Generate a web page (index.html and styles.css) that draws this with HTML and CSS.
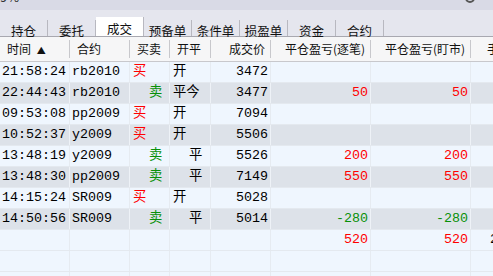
FILE: index.html
```html
<!DOCTYPE html>
<html>
  <head>
    <title>成交</title>
    <meta name="viewport" content="width=device-width, initial-scale=1">
    <link rel="stylesheet" href="styles.css">
  </head>
  <body>
    <div class="topbar">
      <span class="pct">9%</span>
      <svg class="gear" width="12" height="12" viewBox="0 0 12 12"><circle cx="6" cy="6" r="4" fill="none" stroke="#555" stroke-width="2"/></svg>
    </div>
    <div class="gap"></div>
    <div class="tabs">
      <div class="tab">持仓</div>
      <div class="tab">委托</div>
      <div class="tab active">成交</div>
      <div class="tab">预备单</div>
      <div class="tab">条件单</div>
      <div class="tab">损盈单</div>
      <div class="tab">资金</div>
      <div class="tab">合约</div>
    </div>

    <div class="grid">
      <div class="row head">
        <div class="cell">时间 <span class="arrow">▲</span></div>
        <div class="cell">合约</div>
        <div class="cell">买卖</div>
        <div class="cell">开平</div>
        <div class="cell num">成交价</div>
        <div class="cell num">平仓盈亏(逐笔)</div>
        <div class="cell num">平仓盈亏(盯市)</div>
        <div class="cell last">手续费</div>
      </div>

      <div class="row">
        <div class="cell">21:58:24</div><div class="cell">rb2010</div>
        <div class="cell pre buy">买</div><div class="cell pre">开</div>
        <div class="cell num">3472</div><div class="cell num"></div><div class="cell num"></div><div class="cell"></div>
      </div>
      <div class="row alt">
        <div class="cell">22:44:43</div><div class="cell">rb2010</div>
        <div class="cell pre sell">  卖</div><div class="cell pre">平今</div>
        <div class="cell num">3477</div><div class="cell num up">50</div><div class="cell num up">50</div><div class="cell"></div>
      </div>
      <div class="row">
        <div class="cell">09:53:08</div><div class="cell">pp2009</div>
        <div class="cell pre buy">买</div><div class="cell pre">开</div>
        <div class="cell num">7094</div><div class="cell num"></div><div class="cell num"></div><div class="cell"></div>
      </div>
      <div class="row alt">
        <div class="cell">10:52:37</div><div class="cell">y2009</div>
        <div class="cell pre buy">买</div><div class="cell pre">开</div>
        <div class="cell num">5506</div><div class="cell num"></div><div class="cell num"></div><div class="cell"></div>
      </div>
      <div class="row">
        <div class="cell">13:48:19</div><div class="cell">y2009</div>
        <div class="cell pre sell">  卖</div><div class="cell pre">  平</div>
        <div class="cell num">5526</div><div class="cell num up">200</div><div class="cell num up">200</div><div class="cell"></div>
      </div>
      <div class="row alt">
        <div class="cell">13:48:30</div><div class="cell">pp2009</div>
        <div class="cell pre sell">  卖</div><div class="cell pre">  平</div>
        <div class="cell num">7149</div><div class="cell num up">550</div><div class="cell num up">550</div><div class="cell"></div>
      </div>
      <div class="row">
        <div class="cell">14:15:24</div><div class="cell">SR009</div>
        <div class="cell pre buy">买</div><div class="cell pre">开</div>
        <div class="cell num">5028</div><div class="cell num"></div><div class="cell num"></div><div class="cell"></div>
      </div>
      <div class="row alt">
        <div class="cell">14:50:56</div><div class="cell">SR009</div>
        <div class="cell pre sell">  卖</div><div class="cell pre">  平</div>
        <div class="cell num">5014</div><div class="cell num down">-280</div><div class="cell num down">-280</div><div class="cell"></div>
      </div>
      <div class="row">
        <div class="cell"></div><div class="cell"></div><div class="cell"></div><div class="cell"></div>
        <div class="cell num"></div><div class="cell num up">520</div><div class="cell num up">520</div><div class="cell total">2</div>
      </div>
      <div class="row">
        <div class="cell"></div><div class="cell"></div><div class="cell"></div><div class="cell"></div>
        <div class="cell"></div><div class="cell"></div><div class="cell"></div><div class="cell"></div>
      </div>
      <div class="row">
        <div class="cell"></div><div class="cell"></div><div class="cell"></div><div class="cell"></div>
        <div class="cell"></div><div class="cell"></div><div class="cell"></div><div class="cell"></div>
      </div>
    </div>
  </body>
</html>
```

FILE: styles.css
```css
body {
  margin: 0;
  width: 493px;
  height: 276px;
  overflow: hidden;
  background-color: #eef5fd;
  font-family: "Noto Sans CJK SC", "Noto Sans", sans-serif;
}

.topbar {
  height: 10px;
  background-color: #d9dae6;
  display: flex;
  justify-content: space-between;
  overflow: hidden;
}

.pct {
  font-size: 13px;
  line-height: 13px;
  margin-top: -10px;
  color: #333;
}

.gear {
  margin-top: -8px;
  margin-right: 17px;
}

.gap {
  height: 7px;
  background-color: #e5e6ee;
}

.tabs {
  display: flex;
  height: 19px;
  background-color: #e5e6ee;
  border-bottom: 1px solid #a8a8b0;
}

.tab {
  width: 48px;
  box-sizing: border-box;
  font-size: 12.5px;
  line-height: 21px;
  text-align: center;
  color: #111;
  border-right: 1px solid #b8b8c0;
  margin: 3px 0 0;
  height: 16px;
}

.tab.active {
  background-color: #fff;
  margin-top: 0;
  height: 19px;
  line-height: 24px;
}

.grid {
  display: flex;
  flex-direction: column;
}

.row {
  display: grid;
  grid-template-columns: 70px 60px 40px 41px 60px 100px 100px 100px;
  height: 21px;
  box-sizing: border-box;
  border-bottom: 1px solid #e4e9ef;
  background-color: #eff6fe;
  font-family: "Liberation Mono", "Noto Sans CJK SC", monospace;
  font-size: 13.33px;
  line-height: 20px;
  color: #000;
}

.row.alt {
  background-color: #dde2e9;
}

.cell {
  box-sizing: border-box;
  border-right: 1px solid #e6ebf1;
  padding: 0 2px;
  white-space: nowrap;
  overflow: hidden;
}

.row.alt .cell {
  border-right-color: #eef2f7;
}

.pre {
  white-space: pre;
  padding-left: 3px;
}

.num {
  text-align: right;
}

.buy,
.up {
  color: #ff0000;
}

.sell,
.down {
  color: #089008;
}

.total {
  padding-left: 19px;
}

.row.head {
  height: 25px;
  background-color: #f6f6f7;
  border-bottom: 1px solid #c8c8cc;
  font-family: "Noto Sans CJK SC", "Noto Sans", sans-serif;
  font-size: 12px;
  line-height: 24px;
  color: #111;
}

.row.head .cell {
  padding: 0 7px;
  border-right: none;
  box-shadow: inset -1px 0 0 0 #c8c8cc;
  clip-path: inset(3px 0 3px 0);
}

.row.head .cell.num {
  padding-right: 6px;
}

.row.head .cell.last {
  padding-left: 16px;
}

.arrow {
  font-size: 9px;
  margin-left: 3px;
}
```
